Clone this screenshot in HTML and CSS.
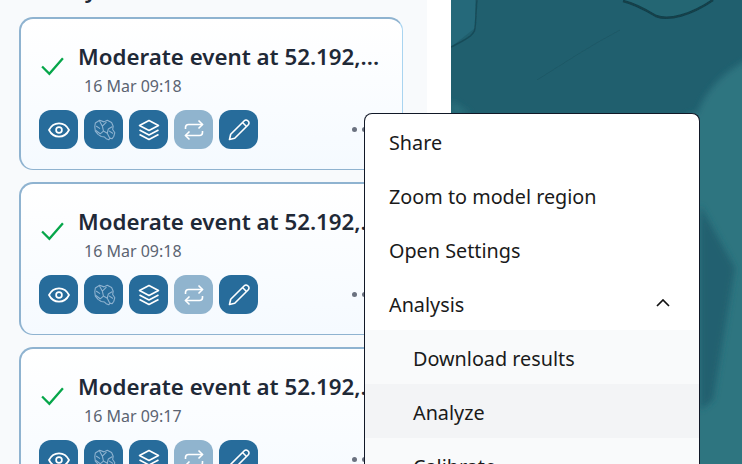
FILE: index.html
```html
<!DOCTYPE html>
<html lang="en">
<head>
 <meta charset="UTF-8">
 <meta name="viewport" content="width=device-width, initial-scale=1.0">
 <title>Events</title>
 <link rel="stylesheet" href="styles.css">
</head>
<body>
 <svg width="0" height="0" class="icon-defs">
  <defs>
   <symbol id="i-check" viewBox="0 0 24 24"><path d="M2 13l7 7L22 5" fill="none" stroke="currentColor" stroke-width="2.200"/></symbol>
   <symbol id="i-eye" viewBox="0 0 24 24"><path d="M2 12C4.200 7.600 7.800 5.400 12 5.400s7.800 2.200 10 6.600c-2.200 4.400-5.800 6.600-10 6.600S4.200 16.400 2 12z" fill="none" stroke="currentColor" stroke-width="1.700"/><circle cx="12" cy="12" r="2.900" fill="none" stroke="currentColor" stroke-width="1.700"/></symbol>
   <symbol id="i-brain" viewBox="0 0 24 24"><g fill="none" stroke="currentColor" stroke-width="1" stroke-linejoin="round" stroke-linecap="round"><path d="M4 5.500l4-2.500 4 1.500 3-1.500 4 2 1.500 3.500-.5 3 2 3-1 3.500-1.500 2-2-.5-1 1.500-2.500-1-1.500-1.500-3-.5-3-2-2.500-3-.5-4z"/><path d="M8 4l2.500 4.500L14 5M10.500 8.500l1 4.500-3 2.500M11.500 13l3.500 2 2 4M15 15l1-4 3.500-2M5 8.500l3 2M4.500 12.500l4 3M17 13l3 2"/></g></symbol>
   <symbol id="i-layers" viewBox="0 0 24 24"><g fill="none" stroke="currentColor" stroke-width="1.600" stroke-linejoin="round"><path d="M12 2.500l9.500 5-9.500 5-9.500-5z"/><path d="M2.500 12l9.500 5 9.500-5"/><path d="M2.500 16.500l9.500 5 9.500-5"/></g></symbol>
   <symbol id="i-swap" viewBox="0 0 24 24"><g fill="none" stroke="currentColor" stroke-width="1.600"><path d="M3.500 11V9.500a3 3 0 0 1 3-3H20.500"/><path d="M16.500 2.500l4 4-4 4"/><path d="M20.500 13v1.500a3 3 0 0 1-3 3H3.500"/><path d="M7.500 13.500l-4 4 4 4"/></g></symbol>
   <symbol id="i-pencil" viewBox="0 0 24 24"><g fill="none" stroke="currentColor" stroke-width="1.600" stroke-linejoin="round"><path d="M2.500 21.500l1.200-5.200L17.300 2.700a2.400 2.400 0 0 1 3.400 0l.6.600a2.400 2.400 0 0 1 0 3.400L7.700 20.300z"/><path d="M15.500 4.500l4 4"/></g></symbol>
  </defs>
 </svg>

 <div class="app">
  <aside class="sidebar">
   <h2 class="list-title">History</h2>
   <div class="event-list">
    <article class="event-card">
     <div class="event-head">
      <svg class="check"><use href="#i-check"/></svg>
      <div class="event-text">
       <div class="event-title">Moderate event at 52.192,...</div>
       <div class="event-date">16 Mar 09:18</div>
      </div>
     </div>
     <div class="event-actions">
      <button class="icon-btn"><svg><use href="#i-eye"/></svg></button>
      <button class="icon-btn brain"><svg><use href="#i-brain"/></svg></button>
      <button class="icon-btn"><svg><use href="#i-layers"/></svg></button>
      <button class="icon-btn off"><svg><use href="#i-swap"/></svg></button>
      <button class="icon-btn"><svg><use href="#i-pencil"/></svg></button>
      <span class="more"><i></i><i></i><i></i></span>
     </div>
    </article>
    <article class="event-card">
     <div class="event-head">
      <svg class="check"><use href="#i-check"/></svg>
      <div class="event-text">
       <div class="event-title">Moderate event at 52.192,...</div>
       <div class="event-date">16 Mar 09:18</div>
      </div>
     </div>
     <div class="event-actions">
      <button class="icon-btn"><svg><use href="#i-eye"/></svg></button>
      <button class="icon-btn brain"><svg><use href="#i-brain"/></svg></button>
      <button class="icon-btn"><svg><use href="#i-layers"/></svg></button>
      <button class="icon-btn off"><svg><use href="#i-swap"/></svg></button>
      <button class="icon-btn"><svg><use href="#i-pencil"/></svg></button>
      <span class="more"><i></i><i></i><i></i></span>
     </div>
    </article>
    <article class="event-card">
     <div class="event-head">
      <svg class="check"><use href="#i-check"/></svg>
      <div class="event-text">
       <div class="event-title">Moderate event at 52.192,...</div>
       <div class="event-date">16 Mar 09:17</div>
      </div>
     </div>
     <div class="event-actions">
      <button class="icon-btn"><svg><use href="#i-eye"/></svg></button>
      <button class="icon-btn brain"><svg><use href="#i-brain"/></svg></button>
      <button class="icon-btn"><svg><use href="#i-layers"/></svg></button>
      <button class="icon-btn off"><svg><use href="#i-swap"/></svg></button>
      <button class="icon-btn"><svg><use href="#i-pencil"/></svg></button>
      <span class="more"><i></i><i></i><i></i></span>
     </div>
    </article>
   </div>
  </aside>
  <div class="gutter"></div>
  <div class="map">
   <svg viewBox="0 0 291 464" preserveAspectRatio="none">
    <defs>
     <filter id="soft" x="-30%" y="-30%" width="160%" height="160%"><feGaussianBlur stdDeviation="3"/></filter>
     <filter id="softer" x="-30%" y="-30%" width="160%" height="160%"><feGaussianBlur stdDeviation="0.700"/></filter>
    </defs>
    <rect width="291" height="464" fill="#205f6e"/>
    <path d="M0 0H24L24 28 0 47z" fill="#25697a"/>
    <path d="M0 100V114H20z" fill="#2a6f7c" filter="url(#soft)"/>
    <path d="M172 0C185 4 195 10 205 16 218 21 240 15 262 0z" fill="#246673"/>
    <path d="M246 114C255 90 272 72 300 58V474H236V114z" fill="#2f7480" filter="url(#soft)"/>
    <path d="M249 205L284 268 262 400 249 410z" fill="#22616f" filter="url(#soft)"/>
    <path d="M0 47C10 42 24 36 24 28 25 20 25 10 26 0" fill="none" stroke="#174c59" stroke-width="1.500" filter="url(#softer)"/>
    <path d="M172 1C185 4 195 10 205 16 218 21 240 15 262 0" fill="none" stroke="#123f4a" stroke-width="2.500" filter="url(#softer)"/>
    <path d="M86 80C115 62 140 45 169 30" fill="none" stroke="#1d5866" stroke-width="1" filter="url(#softer)"/>
   </svg>
  </div>
 </div>

 <div class="menu">
  <div class="menu-item">Share</div>
  <div class="menu-item">Zoom to model region</div>
  <div class="menu-item">Open Settings</div>
  <div class="menu-item menu-parent">Analysis
   <svg class="chevron" viewBox="0 0 14 8"><path d="M1 7l6-6 6 6" fill="none" stroke="#111" stroke-width="1.700"/></svg>
  </div>
  <div class="menu-item sub">Download results</div>
  <div class="menu-item sub hover">Analyze</div>
  <div class="menu-item sub">Calibrate</div>
 </div>
</body>
</html>
```
FILE: styles.css
```css
html, body {
 margin: 0;
 height: 100%;
 overflow: hidden;
}

body {
 font-family: "Noto Sans", "Open Sans", sans-serif;
 color: #1f2937;
 background-color: #ffffff;
}

.icon-defs {
 position: absolute;
}

.app {
 display: flex;
 height: 464px;
}

.sidebar {
 width: 427px;
 flex: none;
 background-color: #f8fafc;
 overflow: hidden;
}

.gutter {
 width: 24px;
 flex: none;
 background-color: #ffffff;
}

.map {
 flex: 1;
}

.map svg {
 display: block;
 width: 100%;
 height: 100%;
}

.list-title {
 margin: -29px 0 0 0;
 padding-left: 19px;
 height: 46px;
 line-height: 36px;
 font-size: 22px;
 font-weight: 600;
}

.event-list {
 display: flex;
 flex-direction: column;
 gap: 12px;
 padding-left: 19px;
}

.event-card {
 width: 384px;
 height: 153px;
 box-sizing: border-box;
 flex: none;
 padding: 23px 19px 0 18px;
 border: 2px solid;
 border-color: #8fb3d0 #a9d4f0 #8fb3d0 #8fb3d0;
 border-width: 2px 1px 1px 2px;
 border-radius: 14px;
 background: linear-gradient(180deg, #ffffff 0%, #f5faff 100%);
}

.event-head {
 display: flex;
 align-items: flex-start;
}

.check {
 width: 25px;
 height: 25px;
 flex: none;
 margin-top: 11px;
 margin-left: 1px;
 margin-right: 13px;
 color: #06a64a;
}

.event-text {
 min-width: 0;
}

.event-title {
 font-size: 22.300px;
 font-weight: 600;
 line-height: 30px;
 white-space: nowrap;
}

.event-date {
 margin-top: 2px;
 margin-left: 6px;
 font-size: 16px;
 line-height: 24px;
 color: #5b6472;
}

.event-actions {
 display: flex;
 align-items: center;
 gap: 6px;
 margin-top: 12px;
}

.icon-btn {
 width: 39px;
 height: 39px;
 flex: none;
 display: flex;
 align-items: center;
 justify-content: center;
 padding: 0;
 border: none;
 border-radius: 12px;
 background-color: #276c9b;
 color: #ffffff;
}

.icon-btn svg {
 width: 24px;
 height: 24px;
}

.brain {
 color: #8fb3d0;
}

.brain svg {
 width: 26px;
 height: 26px;
}

.off {
 background-color: #90b4ce;
}

.more {
 display: flex;
 gap: 5px;
 margin-left: auto;
 margin-right: 6px;
}

.more i {
 width: 5px;
 height: 5px;
 border-radius: 50%;
 background-color: #6b7280;
}

.menu {
 position: absolute;
 left: 364px;
 top: 113px;
 width: 336px;
 height: 351px;
 box-sizing: border-box;
 border: 1px solid #111827;
 border-bottom: none;
 border-radius: 8px 8px 0 0;
 background-color: #ffffff;
 overflow: hidden;
}

.menu-item {
 height: 54px;
 box-sizing: border-box;
 display: flex;
 align-items: center;
 justify-content: space-between;
 padding: 2px 29px 0 24px;
 font-size: 19.800px;
 color: #1a1a1a;
}

.sub {
 padding-left: 48px;
 background-color: #f9fafb;
}

.hover {
 background-color: #f3f4f6;
}

.chevron {
 width: 14px;
 height: 8px;
 margin-top: -2px;
}
```
